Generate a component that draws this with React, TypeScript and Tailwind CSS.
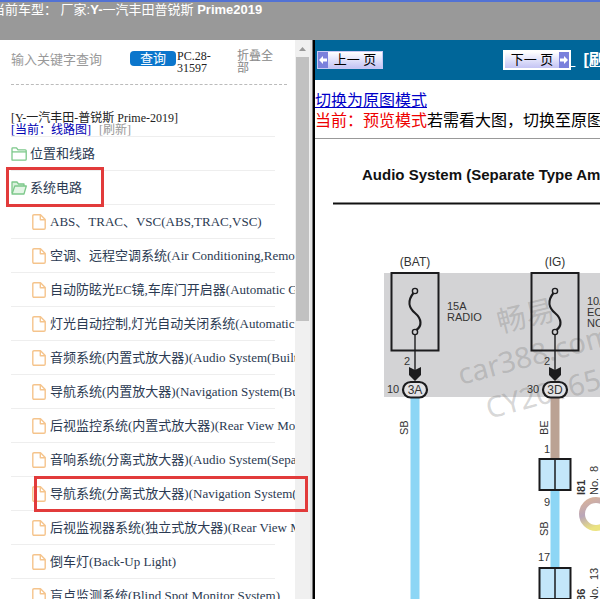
const circuits = [
  'ABS、TRAC、VSC(ABS,TRAC,VSC)',
  '空调、远程空调系统(Air Conditioning,Remote Air Conditioning System)',
  '自动防眩光EC镜,车库门开启器(Automatic Glare-Resistant EC Mirror)',
  '灯光自动控制,灯光自动关闭系统(Automatic Light Control)',
  '音频系统(内置式放大器)(Audio System(Built-in Type Amplifier))',
  '导航系统(内置放大器)(Navigation System(Built-in Type Amplifier))',
  '后视监控系统(内置式放大器)(Rear View Monitor System)',
  '音响系统(分离式放大器)(Audio System(Separate Type Amplifier))',
  '导航系统(分离式放大器)(Navigation System(Separate Type Amplifier))',
  '后视监视器系统(独立式放大器)(Rear View Monitor System)',
  '倒车灯(Back-Up Light)',
  '盲点监测系统(Blind Spot Monitor System)',
]

function FolderIcon({ open }: { open?: boolean }) {
  return (
    <svg width="16" height="14" viewBox="0 0 16 14" fill="none" stroke="#7cc88a" strokeWidth="1.3" strokeLinejoin="round" className="shrink-0">
      {open ? (
        <>
          <path d="M1 12V1h5l1.5 2H13v2" fill="#d9f0dc" />
          <path d="M1 13L3.8 5H15.3L13 13Z" fill="#e4f5e6" />
        </>
      ) : (
        <>
          <path d="M1 13V1.5Q1 .8 1.7.8H5.5L7 2.8H14.3Q15.2 2.8 15.2 3.7V12.3Q15.2 13.2 14.3 13.2H1.7Q1 13.2 1 12.4Z" />
          <path d="M1 4.9H15" />
        </>
      )}
    </svg>
  )
}

function FileIcon() {
  return (
    <svg width="14" height="16" viewBox="0 0 14 16" fill="none" stroke="#f5c48c" strokeWidth="1.4" strokeLinejoin="round" className="shrink-0">
      <path d="M2 .8H8.5L13.2 5.5V14Q13.2 15.2 12 15.2H2Q.8 15.2 .8 14V2Q.8 .8 2 .8Z" />
      <path d="M8.3 1V5.7H13" />
    </svg>
  )
}

function Arrow({ right }: { right?: boolean }) {
  return (
    <span className="flex w-[10px] shrink-0 items-center justify-center bg-[#7a80dc]">
      <svg width="8" height="8" viewBox="0 0 8 8" fill="#fff">
        {right ? <path d="M0 2.5H4V0L8 4L4 8V5.5H0Z" /> : <path d="M8 2.5H4V0L0 4L4 8V5.5H8Z" />}
      </svg>
    </span>
  )
}

function Sidebar() {
  return (
    <aside className="flex w-[310px] shrink-0 bg-white font-['Liberation_Serif','Noto_Sans_CJK_SC',serif]">
      <div className="min-w-0 flex-1 overflow-hidden pl-[11px]">
        <form className="mr-2 flex h-[45px] items-start border-b border-dashed border-[#bbb] pt-[10px]" onSubmit={(e) => e.preventDefault()}>
          <input
            aria-label="输入关键字查询"
            placeholder="输入关键字查询"
            className="h-5 w-[119px] text-[13px] outline-none placeholder:text-[#999]"
          />
          <button className="mt-px h-[15px] w-[46px] rounded bg-[#0b76cc] text-[13px] leading-[14px] text-white">查询</button>
          <span className="w-[61px] pl-px text-xs leading-3 text-[#222]">
            PC.28-
            <br />
            31597
          </span>
          <a href="#fold" className="w-10 text-xs leading-3 text-[#888]">
            折叠全部
          </a>
        </form>

        <div className="mr-5 h-[52px] border-b border-[#eee] pt-[27px] text-xs leading-3 text-[#222]">
          <p className="whitespace-nowrap">[Y-一汽丰田-普锐斯 Prime-2019]</p>
          <p>
            <span className="text-[#0000b4]">[当前：线路图]</span>
            <a href="#refresh" className="ml-2 text-[#999]">[刷新]</a>
          </p>
        </div>

        <ul className="text-[13px] whitespace-nowrap text-[#2b3a52]">
          <li>
            <a href="#location" className="mr-5 flex h-[34px] items-center gap-[3px] border-b border-[#eee]">
              <FolderIcon />
              位置和线路
            </a>
          </li>
          <li>
            <a href="#circuits" className="mr-5 flex h-[34px] items-center gap-[3px] border-b border-[#eee]">
              <FolderIcon open />
              系统电路
            </a>
            <ul>
              {circuits.map((name) => (
                <li key={name} className="mr-5 h-[34px] border-b border-[#eee]">
                  <a href="#circuit" className="flex h-full items-center gap-1 pl-[21px]">
                    <FileIcon />
                    {name}
                  </a>
                </li>
              ))}
            </ul>
          </li>
        </ul>
      </div>

      {/* Scrollbar */}
      <div className="flex w-[15px] flex-col items-center bg-[#f0f0f0]">
        <svg width="15" height="17" viewBox="0 0 15 17" className="shrink-0">
          <path d="M4 11L7.5 7L11 11Z" fill="#999" />
        </svg>
        <div className="h-[264px] w-[13px] bg-[#c1c1c1]" />
      </div>
    </aside>
  )
}

function Fuse({ x }: { x: number }) {
  return (
    <g transform={`translate(${x} 0)`} fill="none" stroke="#1c1c1e">
      <rect x="-23.5" y="134" width="47" height="77.5" strokeWidth="2" />
      <path d="M-1.5 154C-8 162 -6 169 0 174C7 180 7 187 1.5 191" strokeWidth="2.2" />
      <path d="M0 195.5V232" strokeWidth="1.4" />
      <circle cy="152" r="2.6" fill="#d3d3d5" strokeWidth="1.4" />
      <circle cy="193" r="2.6" fill="#d3d3d5" strokeWidth="1.4" />
      <path d="M-6 228L0 231L6 228V236L0 242L-6 236Z" fill="#1c1c1e" stroke="none" />
      <rect x="-12" y="243" width="24" height="15.5" rx="7.7" fill="#e3e3e5" strokeWidth="2.2" />
    </g>
  )
}

function Connector({ y }: { y: number }) {
  return (
    <g stroke="#1a1a1c" strokeWidth="2">
      <rect x="224.5" y={y} width="31" height="31" fill="#c3e6fa" />
      <path d={`M240 ${y}v31`} strokeWidth="1.5" />
    </g>
  )
}

function Diagram() {
  return (
    <svg width="640" height="520" viewBox="0 0 640 520" className="block font-['Liberation_Sans','Noto_Sans_CJK_SC',sans-serif]" role="img" aria-label="Audio System">
      <defs>
        <linearGradient id="ring" x1="0" y1="0" x2="0.4" y2="1">
          <stop offset="0" stopColor="#d0a080" />
          <stop offset="0.5" stopColor="#a890a8" />
          <stop offset="1" stopColor="#e6dc60" />
        </linearGradient>
      </defs>
      <text x="47" y="41" fontSize="15" fontWeight="bold" fill="#111">Audio System (Separate Type Amplifier)</text>
      <path d="M18 64.5H640" stroke="#111" strokeWidth="2" />
      <rect x="69" y="134" width="571" height="124" fill="#d3d3d5" />

      {/* Watermark */}
      <circle cx="281" cy="375" r="14" fill="none" stroke="url(#ring)" strokeWidth="6" opacity="0.8" />
      <g fill="#777" fillOpacity="0.3" fontSize="29" className="font-['Noto_Sans','Noto_Sans_CJK_SC',sans-serif]">
        <text transform="translate(185 194) rotate(-14)">畅易</text>
        <text transform="translate(146 246) rotate(-15)">car388.com</text>
        <text transform="translate(174 280) rotate(-15)">CY20165</text>
      </g>

      <path d="M100 258V520" stroke="#8dd6f5" strokeWidth="9" />
      <path d="M240 258V320" stroke="#bba294" strokeWidth="9" />
      <path d="M240 350V430" stroke="#8dd6f5" strokeWidth="9" />
      <Fuse x={100} />
      <Fuse x={240} />
      <Connector y={320} />
      <Connector y={429} />

      <g fontSize="11" fill="#333">
        <g textAnchor="middle" fontSize="12">
          <text x="100" y="127">(BAT)</text>
          <text x="240" y="127">(IG)</text>
          <text x="100" y="255">3A</text>
          <text x="240" y="255">3D</text>
        </g>
        <text x="132" y="171">15A</text>
        <text x="132" y="182">RADIO</text>
        <text x="272" y="166">10A</text>
        <text x="272" y="177">ECU-IG</text>
        <text x="272" y="188">NO.1</text>
        <text x="89" y="226">2</text>
        <text x="229" y="226">2</text>
        <text x="72" y="254">10</text>
        <text x="212" y="254">30</text>
        <text x="229" y="314">1</text>
        <text x="229" y="367">9</text>
        <text x="223" y="422">17</text>
        <text transform="translate(93 296) rotate(-90)">SB</text>
        <text transform="translate(233 296) rotate(-90)">BE</text>
        <text transform="translate(233 397) rotate(-90)">SB</text>
        <text transform="translate(270 356) rotate(-90)" fontWeight="bold">I81</text>
        <text transform="translate(283 356) rotate(-90)">No.</text>
        <text transform="translate(283 333) rotate(-90)">8</text>
        <text transform="translate(270 465) rotate(-90)" fontWeight="bold">I86</text>
        <text transform="translate(283 464) rotate(-90)">No.</text>
        <text transform="translate(283 441) rotate(-90)">13</text>
      </g>
    </svg>
  )
}

function Content() {
  return (
    <main className="min-w-0 flex-1 overflow-hidden border-l-2 border-black bg-white font-['Liberation_Serif','Noto_Sans_CJK_SC',serif] whitespace-nowrap">
      <div className="flex h-10 items-center bg-[#069] pl-[2px] font-['Liberation_Sans','Noto_Sans_CJK_SC',sans-serif]">
        <button className="flex h-[18px] w-[66px] shrink-0 border border-[#c8c8f4] bg-linear-to-b from-white to-[#c4c4f4] text-[13px] leading-4 text-black">
          <Arrow />
          <span className="flex-1">上一 页</span>
        </button>
        <button className="ml-30 flex h-5 w-[68px] shrink-0 border-2 border-white bg-linear-to-b from-white to-[#c4c4f4] text-[13px] leading-4 text-black">
          <span className="flex-1">下一 页</span>
          <Arrow right />
        </button>
        <span className="text-base text-white underline">&nbsp;</span>
        <a href="#refresh" className="ml-2 text-base font-bold text-white underline">[刷新]</a>
      </div>
      <div className="border-b border-[#999] pt-[11px] pb-[7px] text-base leading-5">
        <a href="#original" className="text-[#0000c8] underline">切换为原图模式</a>
        <p>
          <span className="text-[#e00]">当前：预览模式</span>若需看大图，切换至原图模式
        </p>
      </div>
      <Diagram />
    </main>
  )
}

export default function App() {
  return (
    <div className="relative flex h-screen flex-col overflow-hidden bg-white">
      <header className="h-10 shrink-0 border-t-2 border-[#5272d4] bg-[#999] font-['Liberation_Sans','Noto_Sans_CJK_SC',sans-serif] text-[13px] leading-4 whitespace-nowrap text-white">
        <p className="-ml-2">
          当前车型： 厂家:<b>Y-</b>一汽丰田普锐斯 <b>Prime2019</b>
        </p>
      </header>
      <div className="flex min-h-0 flex-1">
        <Sidebar />
        <div className="w-[3px] shrink-0 border-r border-[#777] bg-[#e4e4e4]" />
        <Content />
      </div>

      {/* Callouts */}
      <div className="pointer-events-none absolute top-[167px] left-[6px] h-10 w-[98px] border-3 border-[#e23b3b]" />
      <div className="pointer-events-none absolute top-[476px] left-[34px] h-9 w-[274px] border-3 border-[#e23b3b]" />
    </div>
  )
}
